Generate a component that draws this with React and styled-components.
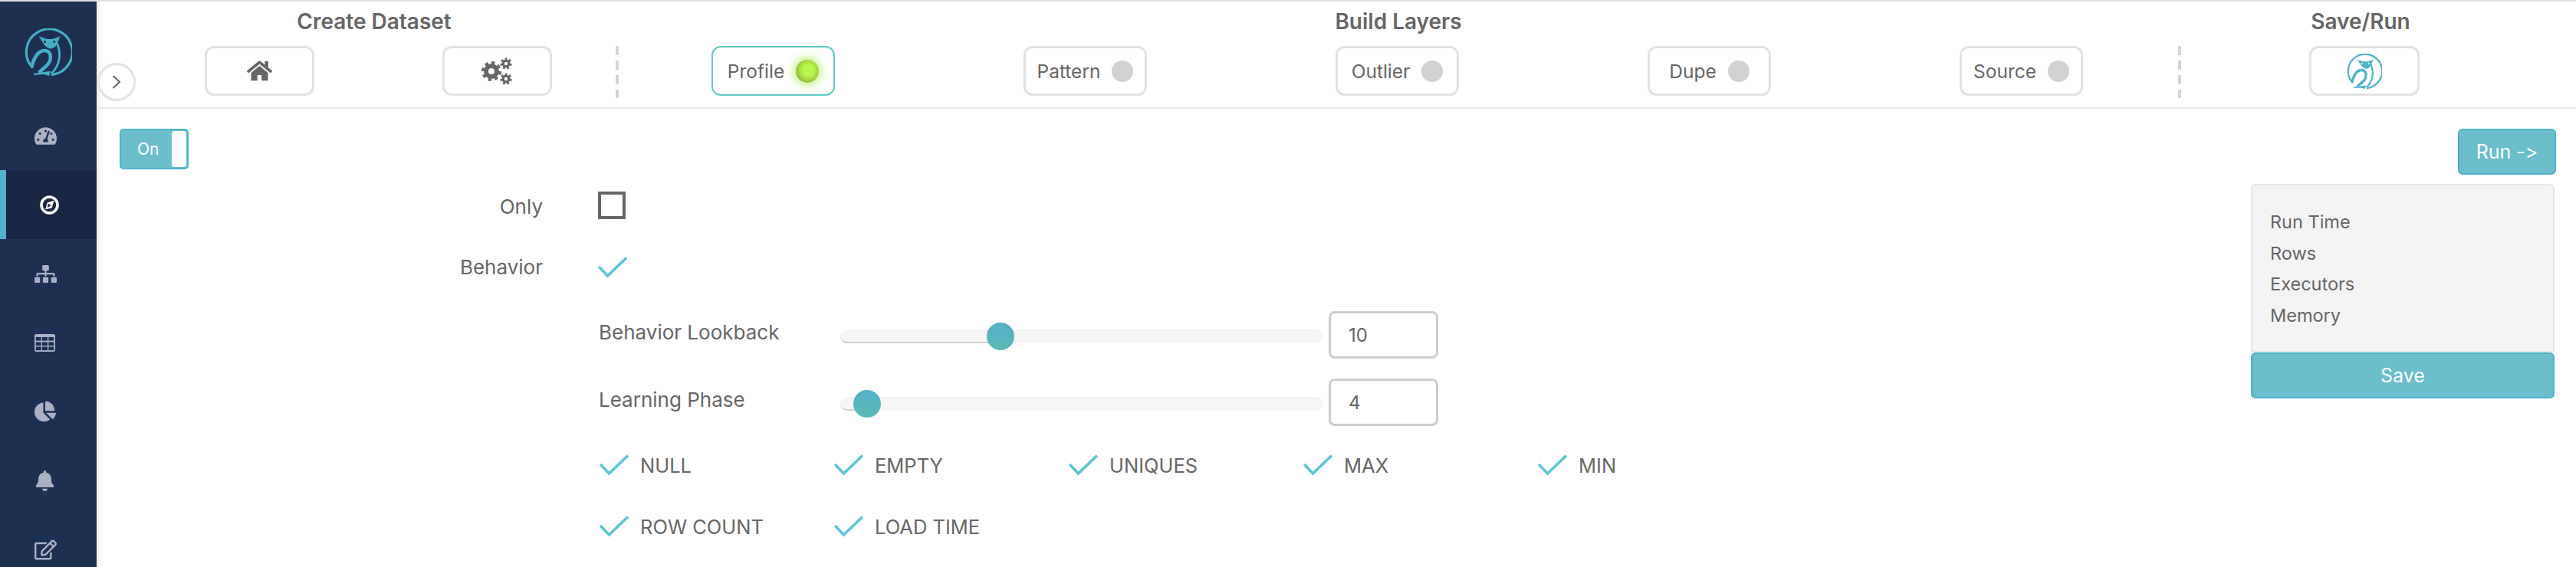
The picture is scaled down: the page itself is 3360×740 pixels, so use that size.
import React from "react";
import styled, { createGlobalStyle } from "styled-components";
import { FaHome, FaTachometerAlt, FaSitemap, FaChartPie, FaBell, FaRegEdit } from "react-icons/fa";

const Global = createGlobalStyle`
  html, body { margin: 0; padding: 0; background: #fff; }
  body { font-family: Inter, "Noto Sans", sans-serif; color: #666; overflow: hidden; font-variant-ligatures: none; font-feature-settings: "calt" 0, "liga" 0; }
  * { box-sizing: border-box; }
`;

const Page = styled.div`
  display: flex;
  width: 3360px;
  height: 740px;
  border-top: 2px solid #dcdce4;
  overflow: hidden;
  position: relative;
`;

const Sidebar = styled.nav`
  flex: none;
  width: 130px;
  height: 738px;
  background: #1d3052;
  border-right: 4px solid #f0f0f1;
`;

const LogoBox = styled.div`
  height: 130px;
  padding: 35px 0 0 32px;
`;

const NavItem = styled.div`
  height: 90px;
  display: flex;
  align-items: center;
  padding-left: ${(p) => (p.$active ? "44px" : "45px")};
  background: ${(p) => (p.$active ? "#182643" : "transparent")};
  border-left: ${(p) => (p.$active ? "8px solid #4fb3c9" : "none")};
  color: ${(p) => (p.$active ? "#fff" : "#a9b1c3")};
`;

const Main = styled.main`
  flex: 1;
  min-width: 0;
  display: flex;
  flex-direction: column;
`;

const Header = styled.header`
  display: grid;
  grid-template-columns: 620px 4px 2034px 4px 474px;
  grid-template-rows: 58px 68px;
  height: 140px;
  padding-left: 53px;
  border-bottom: 2px solid #e8e8ea;
`;

const SectionTitle = styled.h2`
  grid-row: 1;
  grid-column: ${(p) => p.$col};
  margin: 0;
  padding-top: 9px;
  padding-right: ${(p) => p.$shift || 0}px;
  height: 58px;
  text-align: center;
  font-size: 28px;
  line-height: 34px;
  font-weight: 600;
  color: #666;
`;

const Divider = styled.div`
  grid-row: 2;
  grid-column: ${(p) => p.$col};
  width: 4px;
  height: 68px;
  background: repeating-linear-gradient(to bottom, #d4d4d4 0 12px, transparent 12px 19px);
`;

const Cells = styled.div`
  grid-row: 2;
  grid-column: ${(p) => p.$col};
  display: grid;
  grid-template-columns: repeat(${(p) => p.$n}, 1fr);
  justify-items: center;
  align-items: start;
  padding-left: ${(p) => p.$pad || 0}px;
`;

const LayerCells = styled.div`
  grid-row: 2;
  grid-column: 3;
  display: flex;
  align-items: flex-start;
  gap: 246px;
  padding-left: 121px;
`;

const StepButton = styled.div`
  flex: none;
  display: flex;
  align-items: center;
  justify-content: center;
  gap: 15px;
  width: ${(p) => p.$w || 161}px;
  height: 65px;
  border: 3px solid ${(p) => (p.$active ? "#5fcbc4" : "#e2e2e2")};
  border-width: ${(p) => (p.$active ? "2.5px" : "3px")};
  border-radius: 12px;
  background: #fff;
  font-size: 24.5px;
  color: #666;
`;

const Dot = styled.span`
  width: ${(p) => (p.$on ? 30 : 28)}px;
  height: ${(p) => (p.$on ? 30 : 28)}px;
  border-radius: 50%;
  background: ${(p) => (p.$on ? "radial-gradient(circle at 55% 45%, #b8f64e 0 30%, #9ccc3c 62%, #6f8f24 100%)" : "#d2d2d2")};
  box-shadow: ${(p) => (p.$on ? "0 0 12px 3px rgba(170, 236, 80, .75)" : "none")};
`;

const Expander = styled.button`
  position: absolute;
  left: 127px;
  top: 80px;
  width: 50px;
  height: 50px;
  padding: 0;
  border: 3px solid #e2e2e2;
  border-radius: 50%;
  background: #fff;
  display: flex;
  align-items: center;
  justify-content: center;
`;

const Body = styled.section`
  flex: 1;
  display: flex;
  padding: 26px 26px 0;
`;

const Toggle = styled.div`
  flex: none;
  width: 90px;
  height: 53px;
  display: flex;
  align-items: center;
  justify-content: space-between;
  padding: 0 1px 0 21px;
  background: #6dbecc;
  border: 2px solid #4fb3c9;
  border-radius: 5px;
  color: #fff;
  font-size: 21px;
`;

const Knob = styled.span`
  width: 19px;
  height: 47px;
  background: #fff;
  border-radius: 4px;
`;

const Form = styled.div`
  flex: 1;
  padding-top: 80px;
`;

const FieldRow = styled.div`
  display: grid;
  grid-template-columns: 462px 1fr;
  column-gap: 72px;
  align-items: center;
  height: ${(p) => p.$h}px;
  margin-bottom: ${(p) => p.$mb}px;
`;

const FieldLabel = styled.label`
  text-align: right;
  font-size: 26px;
  line-height: 40px;
  color: #666;
  position: relative;
  top: ${(p) => p.$dy || 0}px;
`;

const Box = styled.span`
  display: block;
  width: 36px;
  height: 36px;
  border: 4px solid #666;
`;

const Sub = styled.div`
  margin-left: 534px;
  padding-top: 2px;
`;

const SliderRow = styled.div`
  display: grid;
  grid-template-columns: 308px 629px 143px;
  column-gap: 8px;
  align-items: center;
  height: 62px;
  margin-bottom: 26px;
`;

const SliderLabel = styled.span`
  font-size: 26px;
  line-height: 34px;
  color: #666;
  position: relative;
  top: -3px;
  white-space: nowrap;
  padding-left: 1px;
`;

const Track = styled.div`
  position: relative;
  height: 18px;
  top: 2px;
  border-radius: 9px;
  background: #f6f6f6;
  box-shadow: inset 0 1px 1px #f0f0f0;
`;

const Fill = styled.div`
  height: 18px;
  border-radius: 9px 0 0 9px;
  background: #f6f6f6;
  border-bottom: 2px solid #cfcfcf;
`;

const Thumb = styled.div`
  position: absolute;
  top: -9px;
  width: 36px;
  height: 36px;
  margin-left: -18px;
  border-radius: 50%;
  background: linear-gradient(to bottom, #52b0c8, #5bb9b4);
`;

const NumberBox = styled.div`
  height: 62px;
  padding-left: 23px;
  display: flex;
  align-items: center;
  border: 3px solid #cdcdcd;
  border-radius: 8px;
  font-size: 24px;
  color: #666;
`;

const Checks = styled.div`
  display: grid;
  grid-template-columns: repeat(5, 306px);
  grid-auto-rows: 40px;
  row-gap: 40px;
  margin-top: 31px;
`;

const CheckItem = styled.div`
  display: flex;
  align-items: center;
  gap: 15px;
  padding-left: 2px;
  font-size: 25.5px;
  color: #666;
  text-transform: uppercase;
`;

const Aside = styled.aside`
  flex: none;
  width: 398px;
  display: flex;
  flex-direction: column;
  align-items: flex-end;
`;

const ActionButton = styled.div`
  width: ${(p) => p.$w}px;
  height: 60px;
  margin-right: ${(p) => p.$mr || 0}px;
  display: flex;
  align-items: center;
  justify-content: center;
  background: #6dbecc;
  border: 2px solid #4fb3c9;
  border-radius: 6px;
  color: #fff;
  font-size: 25px;
`;

const Stats = styled.div`
  width: 396px;
  height: 220px;
  margin: 12px 2px 0 0;
  padding: 28px 23px 0;
  background: #f4f4f4;
  border: 2px solid #e6e6e6;
  border-radius: 6px 6px 0 0;
  font-size: 23.5px;
  line-height: 40.7px;
  color: #666;
`;

const Owl = ({ size, color, eye }) => (
  <svg width={size} height={size} viewBox="0 0 60 60" fill="none">
    <path d="M9.5 49A29 29 0 1 1 35 58.6" stroke={color} strokeWidth="3" strokeLinecap="round" />
    <path d="M41 19C46 30 46 45 34 57" stroke={color} strokeWidth="2.8" />
    <path d="M18 10L27 13Q32 14 37 13L45 10L42 18Q39 25 33 26Q26 24 23 18Z" fill={color} />
    <circle cx="25.5" cy="17" r="1.5" fill={eye} />
    <circle cx="37.5" cy="17" r="1.5" fill={eye} />
    <path d="M9 49C12 36 18 28 25 28C32 28 34 34 32 41C30 47 24 50 18 56" stroke={color} strokeWidth="4.4" />
    <path d="M11 57L33 54L31 60L24 58L12 59Z" fill={color} />
  </svg>
);

const Compass = () => (
  <svg width="25" height="25" viewBox="0 0 25 25" fill="none">
    <circle cx="12.5" cy="12.5" r="10.5" stroke="#fff" strokeWidth="3.6" />
    <path d="M18.5 6.8L15.6 16.5L7.2 18.2L9.6 9.4Z" fill="#fff" />
    <path d="M10.6 10.8L15 13L10 16Z" fill="#182643" />
  </svg>
);

const TableIcon = () => (
  <svg width="27" height="23" viewBox="0 0 27 23">
    <rect width="27" height="23" rx="2.5" fill="#a9b1c3" />
    {[4, 10.5, 16.5].flatMap((y) =>
      [1.8, 10, 18.3].map((x) => (
        <rect key={`${x}-${y}`} x={x} y={y} width="6.9" height="4.6" fill="#1d3052" />
      ))
    )}
  </svg>
);

const Gear = ({ cx, cy, r, hole, teeth, tooth }) => (
  <g fill="none" stroke="#666">
    <circle cx={cx} cy={cy} r={(r + hole) / 2} strokeWidth={r - hole} />
    <circle cx={cx} cy={cy} r={r + tooth / 2 - 0.5} strokeWidth={tooth} pathLength={teeth * 2} strokeDasharray="1 1" />
  </g>
);

const GearsIcon = () => (
  <svg width="40" height="36" viewBox="0 0 40 36">
    <Gear cx={13} cy={18} r={10} hole={4} teeth={8} tooth={3.5} />
    <Gear cx={32} cy={8} r={5.5} hole={2.2} teeth={7} tooth={2.6} />
    <Gear cx={32} cy={28} r={5.5} hole={2.2} teeth={7} tooth={2.6} />
  </svg>
);

const Check = ({ w = 38, h = 28 }) => (
  <svg width={w} height={h} viewBox="0 0 38 28" fill="none">
    <path d="M1 13L12.5 25L37 1.5" stroke="#5cc4d6" strokeWidth="3.6" />
  </svg>
);

const Chevron = () => (
  <svg width="12" height="20" viewBox="0 0 12 20" fill="none">
    <path d="M1.5 2L10 10L1.5 18" stroke="#666" strokeWidth="2" />
  </svg>
);

const nav = [
  { key: "gauge", icon: <FaTachometerAlt size={29} /> },
  { key: "compass", icon: <Compass />, active: true },
  { key: "sitemap", icon: <FaSitemap size={29} /> },
  { key: "table", icon: <TableIcon /> },
  { key: "pie", icon: <FaChartPie size={28} /> },
  { key: "bell", icon: <FaBell size={27} /> },
  { key: "edit", icon: <FaRegEdit size={29} /> },
];

const layers = [
  { name: "Profile", on: true },
  { name: "Pattern" },
  { name: "Outlier" },
  { name: "Dupe" },
  { name: "Source" },
];

const sliders = [
  { label: "Behavior Lookback", value: 10 },
  { label: "Learning Phase", value: 4 },
];

const thumbX = (v) => 6 + (v - 3) * 29;

const checks = ["Null", "Empty", "Uniques", "Max", "Min", "Row Count", "Load Time"];

export default function App() {
  return (
    <>
      <Global />
      <Page>
        <Sidebar>
          <LogoBox>
            <Owl size={62} color="#44aec6" eye="#1d3052" />
          </LogoBox>
          {nav.map((n) => (
            <NavItem key={n.key} $active={n.active}>{n.icon}</NavItem>
          ))}
        </Sidebar>
        <Main>
          <Header>
            <SectionTitle $col={1} $shift={10}>Create Dataset</SectionTitle>
            <SectionTitle $col={3}>Build Layers</SectionTitle>
            <SectionTitle $col={5} $shift={6}>Save/Run</SectionTitle>
            <Cells $col={1} $n={2}>
              <StepButton $w={143}><FaHome size={33} color="#666" /></StepButton>
              <StepButton $w={143}><GearsIcon /></StepButton>
            </Cells>
            <Divider $col={2} />
            <LayerCells>
              {layers.map((l) => (
                <StepButton key={l.name} $active={l.on}>
                  {l.name}
                  <Dot $on={l.on} />
                </StepButton>
              ))}
            </LayerCells>
            <Divider $col={4} />
            <Cells $col={5} $n={1} $pad={3}>
              <StepButton $w={144}><Owl size={46} color="#4fb3c9" eye="#fff" /></StepButton>
            </Cells>
          </Header>
          <Body>
            <Toggle>On<Knob /></Toggle>
            <Form>
              <FieldRow $h={36} $mb={45}>
                <FieldLabel $dy={2}>Only</FieldLabel>
                <Box />
              </FieldRow>
              <FieldRow $h={40} $mb={35}>
                <FieldLabel $dy={0}>Behavior</FieldLabel>
                <Check />
              </FieldRow>
              <Sub>
                {sliders.map((s) => (
                  <SliderRow key={s.label}>
                    <SliderLabel>{s.label}</SliderLabel>
                    <Track>
                      <Fill style={{ width: thumbX(s.value) }} />
                      <Thumb style={{ left: thumbX(s.value) }} />
                    </Track>
                    <NumberBox>{s.value}</NumberBox>
                  </SliderRow>
                ))}
                <Checks>
                  {checks.map((c) => (
                    <CheckItem key={c}><Check />{c}</CheckItem>
                  ))}
                </Checks>
              </Sub>
            </Form>
            <Aside>
              <ActionButton $w={128}>Run -&gt;</ActionButton>
              <Stats>
                <div>Run Time</div>
                <div>Rows</div>
                <div>Executors</div>
                <div>Memory</div>
              </Stats>
              <ActionButton $w={396} $mr={2}>Save</ActionButton>
            </Aside>
          </Body>
        </Main>
        <Expander><Chevron /></Expander>
      </Page>
    </>
  );
}
